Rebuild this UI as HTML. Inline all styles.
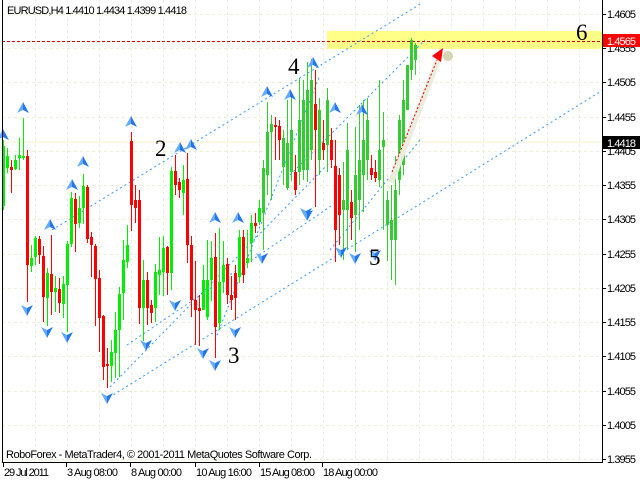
<!DOCTYPE html>
<html><head><meta charset="utf-8"><style>
html,body{margin:0;padding:0;background:#fff;width:640px;height:480px;overflow:hidden}
svg{display:block}
.t{font-family:"Liberation Sans",sans-serif}
.n{font-family:"Liberation Serif",serif;font-size:23px}
</style></head><body>
<svg id="s" width="640" height="480" xmlns="http://www.w3.org/2000/svg">
<rect width="640" height="480" fill="#fff"/>
<g id="grid"></g>
<rect x="327" y="31" width="276" height="18" fill="#ffff88"/>
<line x1="2" y1="142" x2="603" y2="142" stroke="#f0f0c8" stroke-width="1"/>
<line x1="2" y1="41.5" x2="603" y2="41.5" stroke="#d00000" stroke-dasharray="3,2"/>
<g id="lines" stroke="#3399ff" stroke-width="1" stroke-dasharray="2,3" fill="none">
<line x1="52" y1="230" x2="422" y2="3"/>
<line x1="105" y1="400" x2="603" y2="90"/>
<line x1="110" y1="387" x2="330" y2="162"/>
<line x1="127" y1="345" x2="340" y2="200"/>
<line x1="215" y1="340" x2="320" y2="75"/>
<line x1="290" y1="175" x2="425" y2="40"/>
<line x1="330" y1="250" x2="420" y2="140"/>
</g>
<g id="c"></g>
<g id="a"></g>
<line x1="392" y1="180" x2="438" y2="60" stroke="#ececdf" stroke-width="6" stroke-linecap="round"/>
<circle cx="448" cy="56" r="5" fill="#d6d6b4"/>
<line x1="392" y1="172" x2="437" y2="60" stroke="#ee0000" stroke-dasharray="2,2"/>
<polygon points="443,48 432,56 441,62" fill="#ff0000"/>
<g class="n" fill="#000">
<text x="155" y="156">2</text><text x="288" y="74">4</text><text x="228" y="363">3</text>
<text x="369" y="265">5</text><text x="576" y="40">6</text></g>
<line x1="2.5" y1="0" x2="2.5" y2="463" stroke="#000"/>
<line x1="602.5" y1="0" x2="602.5" y2="463" stroke="#000"/>
<line x1="2" y1="462.5" x2="603" y2="462.5" stroke="#000"/>
<g id="ax" class="t" font-size="11" fill="#000"></g>
<rect x="603" y="34" width="37" height="13" fill="#ff0000"/>
<text class="t" x="607" y="45" font-size="11" textLength="29" fill="#fff">1.4565</text>
<rect x="603" y="136" width="37" height="13" fill="#000"/>
<text class="t" x="607" y="147" font-size="11" textLength="29" fill="#fff">1.4418</text>
<text class="t" x="7" y="14" font-size="11" textLength="180" fill="#000">EURUSD,H4  1.4410 1.4434 1.4399 1.4418</text>
<text class="t" x="6" y="458" font-size="11" textLength="306" fill="#000">RoboForex - MetaTrader4, © 2001-2011 MetaQuotes Software Corp.</text>
</svg>
<script>
var NS="http://www.w3.org/2000/svg";
function el(p,t,a){var e=document.createElementNS(NS,t);for(var k in a)e.setAttribute(k,a[k]);document.getElementById(p).appendChild(e);return e;}
for(var x=35;x<603;x+=32)el("grid","line",{x1:x+.5,y1:0,x2:x+.5,y2:462,stroke:"#eeeed8","stroke-dasharray":"3,3"});
var prices=["1.4605","1.4555","1.4505","1.4455","1.4405","1.4355","1.4305","1.4255","1.4205","1.4155","1.4105","1.4055","1.4005","1.3955"];
for(var i=0;i<14;i++){var y=14+i*34.23;el("grid","line",{x1:2,y1:Math.round(y)+.5,x2:603,y2:Math.round(y)+.5,stroke:"#eeeed8","stroke-dasharray":"3,3"});
el("ax","line",{x1:603,y1:Math.round(y)+.5,x2:606,y2:Math.round(y)+.5,stroke:"#000"});
var t=el("ax","text",{x:607,y:Math.round(y)+4,textLength:29});t.textContent=prices[i];}
var tl=[["29 Jul 2011",3,45],["3 Aug 08:00",66,51],["8 Aug 00:00",130,51],["10 Aug 16:00",195,56],["15 Aug 08:00",259,55],["18 Aug 00:00",322,55]];
tl.forEach(function(q){el("ax","line",{x1:q[1]+.5,y1:463,x2:q[1]+.5,y2:467,stroke:"#000"});var t=el("ax","text",{x:q[1]+1,y:476,textLength:q[2]});t.textContent=q[0];});
var C=[[3,'g',146,206,140,210],[7,'g',156,168,148,173],[11,'r',167,170,160,193],[15,'g',160,169,155,170],[19,'g',155,158,138,170],[23,'g',156,158,118,160],
[27,'r',156,265,150,302],[31,'g',258,266,245,272],[35,'g',238,257,236,265],[39,'r',239,255,236,264],[43,'r',256,297,246,322],[47,'g',273,298,268,326],
[51,'r',274,292,235,315],[55,'g',288,292,276,312],[59,'r',289,303,278,313],[63,'g',284,304,276,318],[67,'g',244,285,241,332],[71,'g',198,244,192,247],
[75,'r',199,224,193,252],[79,'g',208,223,196,228],[83,'g',186,208,174,224],[87,'r',187,239,185,243],[91,'r',237,245,232,277],[95,'r',246,279,244,326],
[99,'r',278,318,270,352],[103,'r',316,367,315,380],[107,'r',364,366,348,388],[111,'g',352,366,340,382],[115,'g',330,353,312,378],[119,'g',294,330,287,377],
[123,'g',260,293,240,320],[127,'g',245,262,225,268],[131,'r',141,205,132,231],[135,'r',200,208,185,223],[139,'r',200,308,190,324],[143,'g',280,308,260,341],
[147,'r',280,308,272,325],[151,'r',305,313,300,323],[155,'g',272,308,264,322],[159,'g',270,275,237,295],[163,'g',248,272,236,296],[167,'r',247,273,246,295],
[171,'g',171,273,167,290],[175,'r',171,185,155,195],[179,'r',182,190,178,198],[183,'g',180,193,165,215],[187,'r',179,245,153,263],[191,'r',245,300,236,317],
[195,'r',300,310,261,345],[199,'r',308,311,295,346],[203,'g',280,310,265,310],[207,'g',280,317,240,320],[211,'g',258,280,241,301],[215,'r',257,327,233,358],
[219,'g',282,323,228,330],[223,'g',265,282,241,293],[227,'r',264,295,258,304],[231,'r',295,300,276,310],[235,'r',273,298,265,320],[239,'g',237,277,230,283],
[243,'r',237,275,230,283],[247,'g',258,263,230,268],[251,'g',223,243,215,262],[255,'r',223,226,213,233],[259,'g',208,222,200,225],[263,'g',168,213,160,250],
[267,'g',132,175,102,195],[271,'g',124,132,115,200],[275,'r',125,127,117,160],[279,'r',126,140,120,160],[283,'g',138,167,130,185],[287,'g',143,188,100,190],
[291,'g',130,172,92,181],[295,'r',172,190,155,195],[299,'g',120,172,78,185],[303,'g',100,170,80,180],[307,'g',90,170,62,182],[311,'g',80,150,59,160],
[315,'r',104,130,70,207],[319,'g',110,160,98,175],[323,'r',143,150,120,160],[327,'g',100,145,88,172],[331,'r',140,160,128,168],[335,'r',166,230,140,262],
[339,'r',175,215,168,245],[343,'g',200,210,162,260],[347,'g',150,210,123,250],[351,'r',202,218,190,240],[355,'g',175,215,127,252],[359,'g',160,200,105,230],
[363,'g',140,175,100,212],[367,'g',120,160,98,180],[371,'r',168,175,155,180],[375,'r',172,178,160,182],[379,'g',150,180,80,187],[383,'g',140,147,112,230],
[387,'g',200,225,191,261],[391,'g',220,240,185,280],[395,'g',190,240,156,285],[399,'g',120,180,115,195],[403,'g',100,165,80,175],[407,'g',65,110,65,110],
[411,'g',40,70,38,80],[415,'g',45,60,43,75]];
C.forEach(function(c){var col=c[1]=='r'?'#ff0000':(c[0]>=260?'#33cc33':'#00ee00');
el("c","rect",{x:c[0],y:c[4],width:1,height:c[5]-c[4],fill:col});
el("c","rect",{x:c[0]-1,y:Math.min(c[2],c[3]),width:3,height:Math.max(2,Math.abs(c[3]-c[2])),fill:col});});
var U=[[23,108],[3,135],[50,225],[72,185],[83,162],[131,122],[180,148],[191,145],[215,218],[238,218],[267,92],[290,95],[313,63],[335,108],[362,110]];
var D=[[27,310],[47,332],[67,337],[107,398],[146,345],[175,305],[203,353],[215,365],[235,332],[262,258],[306,213],[355,258],[341,252],[375,255],[307,215]];
U.forEach(function(p){var x=p[0],y=p[1];el("a","polygon",{points:(x-6)+","+(y+5)+" "+x+","+(y-6)+" "+x+","+(y+2),fill:"#66aaff"});
el("a","polygon",{points:(x+6)+","+(y+5)+" "+x+","+(y-6)+" "+x+","+(y+2),fill:"#2277ee"});});
D.forEach(function(p){var x=p[0],y=p[1];el("a","polygon",{points:(x-6)+","+(y-5)+" "+x+","+(y+6)+" "+x+","+(y-2),fill:"#66aaff"});
el("a","polygon",{points:(x+6)+","+(y-5)+" "+x+","+(y+6)+" "+x+","+(y-2),fill:"#2277ee"});});
</script>
</body></html>
